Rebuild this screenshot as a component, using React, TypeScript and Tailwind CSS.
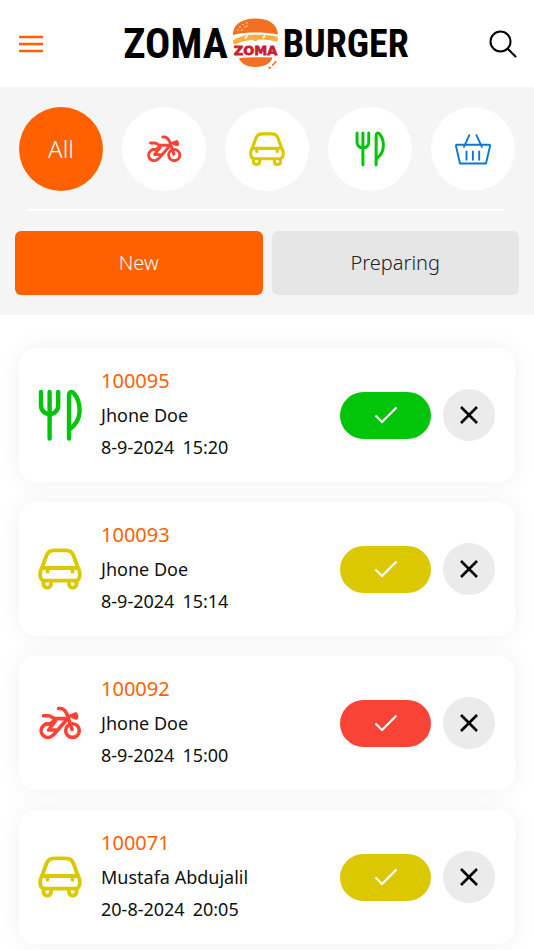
import type { ReactNode } from "react";

type Kind = "bike" | "car" | "dine" | "basket";

interface Order {
  id: string;
  name: string;
  date: string;
  time: string;
  kind: Kind;
}

const orders: Order[] = [
  { id: "100095", name: "Jhone Doe", date: "8-9-2024", time: "15:20", kind: "dine" },
  { id: "100093", name: "Jhone Doe", date: "8-9-2024", time: "15:14", kind: "car" },
  { id: "100092", name: "Jhone Doe", date: "8-9-2024", time: "15:00", kind: "bike" },
  { id: "100071", name: "Mustafa Abdujalil", date: "20-8-2024", time: "20:05", kind: "car" },
];

const textColor: Record<Kind, string> = {
  bike: "text-[#f94336]",
  car: "text-[#dcc800]",
  dine: "text-[#02c509]",
  basket: "text-[#0878d8]",
};

const fillColor: Record<Kind, string> = {
  bike: "bg-[#f94336]",
  car: "bg-[#dcc800]",
  dine: "bg-[#02c509]",
  basket: "bg-[#0878d8]",
};

function BikeIcon({ className }: { className: string }) {
  return (
    <svg viewBox="0 0 44 34" className={className} fill="none" stroke="currentColor" strokeWidth="3.6" strokeLinecap="round" strokeLinejoin="round">
      <path d="M12 18.300A6.700 6.700 0 1 0 14.500 29.500C16 28.500 17 27 18 26L29.500 12.800" />
      <circle cx="34.500" cy="24.600" r="6.800" />
      <path d="M5.500 9.800h5c3 0 4 2.800 7 2.800h13" />
      <path d="M20.500 2.500h2c4 0 5.500 3 7 7l4.500 14" />
      <path d="M8 17.800h3c3 0 4-2.500 6-4.500M17.500 15l-7 9h7" />
      <path d="M31.500 9.800l6-2.300c1.500-.5 2.500 5.500.5 5z" fill="currentColor" strokeWidth="2.500" />
    </svg>
  );
}

function CarIcon({ className }: { className: string }) {
  return (
    <svg viewBox="0 0 44 42" className={className} fill="none" stroke="currentColor" strokeWidth="3.800" strokeLinecap="round" strokeLinejoin="round">
      <path d="M4 20L8.500 7.500C10 3.500 12 2.300 16 2.300h12c4 0 6 1.200 7.500 5.200L40 20c2.500 3 3 12-2 12.700H6C1 32 1.500 23 4 20z" />
      <path d="M4 20h36M9.500 20.500v3.200M34.500 20.500v3.200" />
      <path d="M5.500 33v3.300c0 4.400 7.500 4.400 7.500 0V33M31 33v3.300c0 4.400 7.500 4.400 7.500 0V33" />
    </svg>
  );
}

function DineIcon({ className }: { className: string }) {
  return (
    <svg viewBox="0 0 44 52" className={className} fill="none" stroke="currentColor" strokeWidth="4.400" strokeLinecap="round" strokeLinejoin="round">
      <path d="M3 3v13.500a8.600 8.600 0 0 0 17.200 0V3M11.600 3v46.500" />
      <path d="M31 49.500V6.500C31 2.500 34 2 36 4.500c3.500 4 5.600 10 5.600 17C41.600 30 37 36.500 31 41" />
    </svg>
  );
}

function BasketIcon({ className }: { className: string }) {
  return (
    <svg viewBox="0 0 36 31" className={className} fill="none" stroke="currentColor" strokeWidth="1.900" strokeLinecap="round" strokeLinejoin="round">
      <path d="M2 10.800h32c1 0 1.300.5 1 1.400L31 29.500H5L1 12.200c-.3-.9 0-1.400 1-1.400z" />
      <path d="M14.300 1.200L9 12.800M21.500 1.200l5.300 11.600M11.500 17.500v8.300M17.900 17.500v8.300M24.200 17.500v8.300" />
    </svg>
  );
}

function KindIcon({ kind, small }: { kind: Kind; small?: boolean }) {
  if (kind === "bike") return <BikeIcon className={small ? "w-9" : "w-11"} />;
  if (kind === "car") return <CarIcon className={small ? "w-9" : "w-11"} />;
  if (kind === "dine") return <DineIcon className={small ? "w-[30px]" : "w-11"} />;
  return <BasketIcon className="w-9" />;
}

function BurgerLogo() {
  return (
    <svg viewBox="0 0 47 52" className="w-[47px] shrink-0">
      <path d="M1 17C1 5.500 11 .5 23.500.5S45 5 46 16.500c-7-1.600-14-2-22-2S8 15 1 17z" fill="#f36f21" />
      <path d="M1 22.500c6-4 13-5.700 22-5.700 8 0 16 .2 22.500 2 .8 2 .5 3.500-.5 4.700-6-1.500-12-2.200-19-2l-2.500 2-3-1.500c-6 .3-12 1.500-17 4.500C1.500 26 .8 24.500 1 22.500z" fill="#fbb03b" />
      <path d="M13 20.500l2.500-3M31 20l2-2.500" stroke="white" strokeWidth="1.500" />
      <path d="M7 40c11-1 22-1 33.500-.5C39 45.500 32 49 23.500 49S9 46 7 40z" fill="#f36f21" />
      <path d="M44 43c-1 2.200-2 3.200-3.800 4.300M39 49l-2.500 1.500" stroke="#f36f21" strokeWidth="1.600" fill="none" />
      <g fill="white">
        <circle cx="6" cy="12" r=".7" />
        <circle cx="8" cy="9" r=".7" />
        <circle cx="10" cy="12" r=".7" />
        <circle cx="11" cy="6.500" r=".7" />
        <circle cx="13" cy="9" r=".7" />
        <circle cx="15" cy="5" r=".7" />
        <circle cx="15" cy="8" r=".7" />
      </g>
      <text
        x="23.500"
        y="37"
        textAnchor="middle"
        fill="#c9202d"
        stroke="#c9202d"
        strokeWidth=".8"
        className="font-['DejaVu_Sans',sans-serif] text-[13px] font-bold"
      >
        ZOMA
      </text>
    </svg>
  );
}

function Header() {
  return (
    <header className="flex h-[87px] items-center justify-between bg-white pr-[17px] pl-[19px]">
      <button aria-label="Menu" className="w-6 text-[#ff6100]">
        <svg viewBox="0 0 24 18" fill="none" stroke="currentColor" strokeWidth="2.400">
          <path d="M0 2h24M0 9h24M0 16h24" />
        </svg>
      </button>
      <h1 className="flex items-center gap-1 font-['Roboto_Condensed','Liberation_Sans_Narrow',sans-serif] leading-none font-bold text-black">
        <span className="text-[42px]">ZOMA</span>
        <BurgerLogo />
        <span className="text-[38px]">BURGER</span>
      </h1>
      <button aria-label="Search" className="w-7 text-black">
        <svg viewBox="0 0 28 28" fill="none" stroke="currentColor" strokeWidth="2" strokeLinecap="round">
          <circle cx="11.500" cy="11.500" r="10" />
          <path d="M19 19l7.500 7.500" />
        </svg>
      </button>
    </header>
  );
}

function FilterButton({ label, active, children }: { label: string; active?: boolean; children: ReactNode }) {
  return (
    <button
      aria-label={label}
      className={`flex size-[84px] items-center justify-center rounded-full text-2xl font-light ${active ? "bg-[#ff6100] text-white" : "bg-white"}`}
    >
      {children}
    </button>
  );
}

function OrderCard({ order }: { order: Order }) {
  return (
    <li className="flex h-[134px] items-center rounded-2xl bg-white pr-5 pl-[19px] shadow-[0_0_24px_rgba(0,0,0,0.06)]">
      <span className={textColor[order.kind]}>
        <KindIcon kind={order.kind} />
      </span>
      <div className="ml-[19px] flex-1 pb-[5px] text-lg leading-8 text-[#111111]">
        <h2 className="text-xl leading-9 text-[#ff6100]">{order.id}</h2>
        <p>{order.name}</p>
        <p className="flex gap-2">
          <span>{order.date}</span>
          <span>{order.time}</span>
        </p>
      </div>
      <button
        aria-label={`Accept order ${order.id}`}
        className={`flex h-[47px] w-[91px] items-center justify-center rounded-full text-white ${fillColor[order.kind]}`}
      >
        <svg viewBox="0 0 24 18" className="w-6" fill="none" stroke="currentColor" strokeWidth="2.200">
          <path d="M1.500 9.500l6.500 6.500L22.500 1.500" />
        </svg>
      </button>
      <button
        aria-label={`Reject order ${order.id}`}
        className="ml-3 flex size-[52px] items-center justify-center rounded-full bg-[#ebebeb] text-black"
      >
        <svg viewBox="0 0 18 18" className="w-[18px]" fill="none" stroke="currentColor" strokeWidth="2.600">
          <path d="M1 1l16 16M17 1L1 17" />
        </svg>
      </button>
    </li>
  );
}

export default function App() {
  return (
    <div className="min-h-screen bg-white pb-5 font-['Noto_Sans',sans-serif]">
      <Header />
      <section className="bg-[#f5f5f5] px-[15px] pt-5 pb-5">
        <nav className="flex justify-between px-1">
          <FilterButton label="All" active>
            All
          </FilterButton>
          <FilterButton label="Delivery">
            <span className={textColor.bike}><KindIcon kind="bike" small /></span>
          </FilterButton>
          <FilterButton label="Car">
            <span className={textColor.car}><KindIcon kind="car" small /></span>
          </FilterButton>
          <FilterButton label="Dine in">
            <span className={textColor.dine}><KindIcon kind="dine" small /></span>
          </FilterButton>
          <FilterButton label="Pickup">
            <span className={textColor.basket}><KindIcon kind="basket" small /></span>
          </FilterButton>
        </nav>
        <hr className="mx-[14px] mt-[18px] mb-5 border-t-2 border-white" />
        <div className="grid grid-cols-2 gap-[9px] text-xl font-light">
          <button className="h-16 rounded-md bg-[#ff6100] text-white">New</button>
          <button className="h-16 rounded-md bg-[#e6e6e6] text-[#222222]">Preparing</button>
        </div>
      </section>
      <ul className="flex flex-col gap-5 px-[19px] pt-[33px]">
        {orders.map((order) => (
          <OrderCard key={order.id} order={order} />
        ))}
      </ul>
    </div>
  );
}
